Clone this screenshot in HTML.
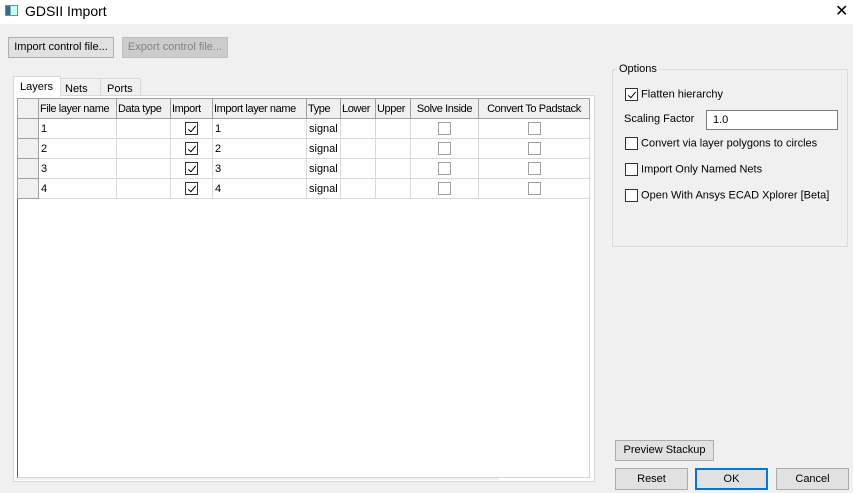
<!DOCTYPE html>
<html><head><style>
*{box-sizing:border-box;margin:0;padding:0}
body{width:853px;height:493px;background:#f0f0f0;font-family:"Liberation Sans",Arial,sans-serif;font-size:11px;color:#000;position:relative;overflow:hidden}
.a{position:absolute}
.btn{position:absolute;background:#e1e1e1;border:1px solid #adadad;text-align:center;line-height:19px;font-size:11px}
table{border-collapse:collapse;table-layout:fixed}
td{border:1px solid #d8d8d8;height:20px;padding:0 2px;font-size:11px;white-space:nowrap;overflow:hidden}
th{border:1px solid #a0a0a0;background:#f0f0f0;height:20px;font-weight:normal;font-size:11px;letter-spacing:-0.4px;padding:0 1px;text-align:left;white-space:nowrap;overflow:hidden}
td.rh{background:#f0f0f0;border:1px solid #a0a0a0}
.cb{display:inline-block;width:13px;height:13px;border:1px solid #a0a0a0;background:#fff;vertical-align:middle;position:relative}
.cbk{border-color:#333}
.chk::after{content:"";position:absolute;left:4px;top:1px;width:3px;height:7px;border:solid #000;border-width:0 1.5px 1.5px 0;transform:rotate(40deg)}
.c{text-align:center}
</style></head><body>
<div class="a" style="left:0;top:0;width:853px;height:24px;background:#fff"></div>
<div class="a" style="left:5px;top:5px;width:13px;height:11px;border:1px solid #888;background:linear-gradient(90deg,#2c6e8a 40%,#cfe 40%)"></div>
<div class="a" style="left:25px;top:3px;font-size:14px">GDSII Import</div>
<div class="a" style="left:835px;top:1px;font-size:16px">✕</div>

<div class="btn" style="left:8px;top:37px;width:106px;height:21px">Import control file...</div>
<div class="btn" style="left:122px;top:37px;width:106px;height:21px;background:#ccc;border-color:#bfbfbf;color:#838383">Export control file...</div>

<div class="a" style="left:13px;top:95px;width:582px;height:387px;background:#fff;border:1px solid #d9d9d9"></div>
<div class="a" style="left:13px;top:76px;width:48px;height:21px;background:#fff;border:1px solid #d9d9d9;border-bottom:none;padding:4px 0 0 6px">Layers</div>
<div class="a" style="left:60px;top:78px;width:41px;height:18px;border:1px solid #d9d9d9;padding:4px 0 0 4px">Nets</div>
<div class="a" style="left:100px;top:78px;width:41px;height:18px;border:1px solid #d9d9d9;padding:4px 0 0 6px">Ports</div>

<div class="a" style="left:15px;top:477px;width:484px;height:3px;background:#f0f0f0"></div>
<div class="a" style="left:17px;top:98px;width:573px;height:380px;border:1px solid #d4d4d4;border-left:1px solid #606060;border-top:none"></div>
<table class="a" style="left:17px;top:98px;width:572px">
<colgroup><col style="width:21px"><col style="width:78px"><col style="width:54px"><col style="width:42px"><col style="width:94px"><col style="width:34px"><col style="width:35px"><col style="width:35px"><col style="width:68px"><col style="width:111px"></colgroup>
<tr><th></th><th>File layer name</th><th>Data type</th><th>Import</th><th>Import layer name</th><th>Type</th><th>Lower</th><th>Upper</th><th class="c">Solve Inside</th><th class="c">Convert To Padstack</th></tr>
<tr><td class="rh"></td><td>1</td><td></td><td class="c"><span class="cb cbk chk"></span></td><td>1</td><td>signal</td><td></td><td></td><td class="c"><span class="cb"></span></td><td class="c"><span class="cb"></span></td></tr>
<tr><td class="rh"></td><td>2</td><td></td><td class="c"><span class="cb cbk chk"></span></td><td>2</td><td>signal</td><td></td><td></td><td class="c"><span class="cb"></span></td><td class="c"><span class="cb"></span></td></tr>
<tr><td class="rh"></td><td>3</td><td></td><td class="c"><span class="cb cbk chk"></span></td><td>3</td><td>signal</td><td></td><td></td><td class="c"><span class="cb"></span></td><td class="c"><span class="cb"></span></td></tr>
<tr><td class="rh"></td><td>4</td><td></td><td class="c"><span class="cb cbk chk"></span></td><td>4</td><td>signal</td><td></td><td></td><td class="c"><span class="cb"></span></td><td class="c"><span class="cb"></span></td></tr>
</table>

<div class="a" style="left:612px;top:69px;width:236px;height:178px;border:1px solid #dcdcdc"></div>
<div class="a" style="left:617px;top:63px;background:#f0f0f0;padding:0 2px">Options</div>
<div class="a" style="left:625px;top:88px"><span class="cb cbk chk" style="border-color:#333"></span> Flatten hierarchy</div>
<div class="a" style="left:624px;top:113px">Scaling Factor</div>
<div class="a" style="left:706px;top:110px;width:132px;height:20px;background:#fff;border:1px solid #7a7a7a;padding:3px 0 0 6px">1.0</div>
<div class="a" style="left:625px;top:137px"><span class="cb cbk"></span> Convert via layer polygons to circles</div>
<div class="a" style="left:625px;top:163px"><span class="cb cbk"></span> Import Only Named Nets</div>
<div class="a" style="left:625px;top:189px"><span class="cb cbk"></span> Open With Ansys ECAD Xplorer [Beta]</div>

<div class="btn" style="left:615px;top:440px;width:99px;height:21px">Preview Stackup</div>
<div class="btn" style="left:615px;top:468px;width:73px;height:22px;line-height:20px">Reset</div>
<div class="btn" style="left:695px;top:468px;width:73px;height:22px;line-height:18px;border:2px solid #0078d7">OK</div>
<div class="btn" style="left:776px;top:468px;width:73px;height:22px;line-height:20px">Cancel</div>
</body></html>
